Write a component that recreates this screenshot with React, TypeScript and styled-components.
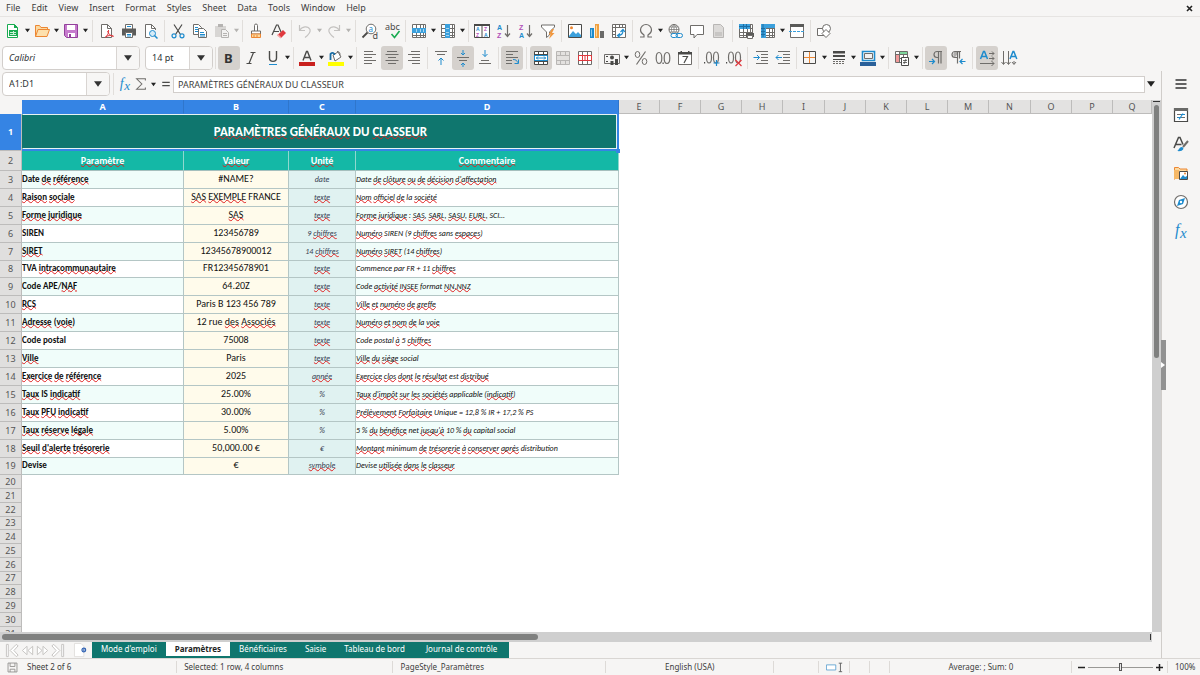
import React from "react";
import styled, { createGlobalStyle, css } from "styled-components";

const UI = `"Noto Sans", "Open Sans", sans-serif`;
const CELL = `Carlito, Lato, sans-serif`;
const SMALL = `"Liberation Sans", sans-serif`;

const c = {
  bg: "#f6f5f4",
  line: "#d9d6d3",
  ink: "#3d3d3d",
  dark: "#4a4a48",
  mid: "#6f6d6a",
  off: "#c4c2c0",
  blue: "#1e8bcd",
  sel: "#3584e4",
  orange: "#ed8733",
  red: "#e0393e",
  green: "#18ab50",
  purple: "#b04fb8",
  teal: "#0f766e",
  tealLight: "#14b8a6",
};

const Global = createGlobalStyle`
  *, *::before, *::after { box-sizing: border-box; }
  html, body { margin: 0; height: 100%; }
  body { background: ${c.bg}; color: ${c.ink}; font: 9px/12px ${UI}; overflow: hidden; }
  button, select, input { font: inherit; color: inherit; margin: 0; padding: 0; border: 0; background: none; }
`;

/* ---------- layout ---------- */

const Page = styled.div`
  display: flex;
  flex-direction: column;
  height: 100vh;
`;

const MenuBar = styled.nav`
  display: flex;
  align-items: center;
  gap: 11px;
  flex: none;
  height: 17px;
  padding: 0 6px;
  border-bottom: 1px solid #e6e4e2;
`;

const MenuItem = styled.button`
  white-space: nowrap;
`;

const CloseButton = styled.button`
  display: flex;
  margin-left: auto;
`;

const Toolbar = styled.div<{ $height: number }>`
  display: flex;
  align-items: center;
  flex: none;
  height: ${(p) => p.$height}px;
  padding: 0 2px 1px;
`;

const ToolButton = styled.button<{ $active?: boolean }>`
  display: flex;
  align-items: center;
  justify-content: center;
  flex: none;
  width: 22px;
  height: 24px;
  border-radius: 3px;
  ${(p) => p.$active && css`background: #d5d1cd;`}
`;

const DropButton = styled.button`
  display: flex;
  align-items: center;
  justify-content: center;
  flex: none;
  width: 7px;
  height: 24px;
`;

const Separator = styled.span<{ $width?: number }>`
  flex: none;
  width: ${(p) => p.$width ?? 5}px;
  height: 22px;
  background: linear-gradient(#e1dedb, #e1dedb) center / 1px 100% no-repeat;
`;

const Combo = styled.label<{ $width: number }>`
  position: relative;
  display: flex;
  flex: none;
  width: ${(p) => p.$width}px;
  height: 24px;
  border: 1px solid #d2cecb;
  border-radius: 4px;
  background: #fff;
  overflow: hidden;
`;

const ComboSelect = styled.select<{ $italic?: boolean }>`
  appearance: none;
  width: 100%;
  padding: 0 24px 0 6px;
  color: #2e3436;
  font-style: ${(p) => (p.$italic ? "italic" : "normal")};
`;

const ComboArrow = styled.span`
  position: absolute;
  inset: 0 0 0 auto;
  display: flex;
  align-items: center;
  justify-content: center;
  width: 23px;
  border-left: 1px solid #d9d5d2;
  background: #f7f6f5;
  pointer-events: none;
`;

const Gap = styled.span<{ $width: number }>`
  flex: none;
  width: ${(p) => p.$width}px;
`;

const Main = styled.div`
  display: flex;
  flex: 1;
  min-height: 0;
`;

const Workspace = styled.main`
  display: flex;
  flex-direction: column;
  flex: 1;
  min-width: 0;
`;

const FormulaBar = styled.div`
  display: flex;
  align-items: center;
  flex: none;
  height: 29px;
  padding: 0 4px 3px 2px;
`;

const FormulaInput = styled.input`
  flex: 1;
  min-width: 0;
  height: 17px;
  padding: 0 4px;
  border: 1px solid #d2cecb;
  background: #fff;
`;

const SmallButton = styled.button<{ $width: number }>`
  display: flex;
  align-items: center;
  justify-content: center;
  flex: none;
  width: ${(p) => p.$width}px;
  height: 22px;
`;

const SheetRow = styled.div`
  display: flex;
  flex: 1;
  min-height: 0;
`;

const SheetView = styled.div`
  flex: 1;
  min-width: 0;
  background: #fff;
  overflow: hidden;
`;

const Sidebar = styled.aside`
  position: relative;
  display: flex;
  flex-direction: column;
  align-items: center;
  gap: 5px;
  flex: none;
  width: 39px;
  padding-top: 1px;
  border-left: 1px solid #d0cdca;

  & > :first-child {
    margin-bottom: 2px;
  }
`;

const SidebarHandle = styled.button`
  position: absolute;
  left: -1px;
  top: calc(50% - 25px);
  display: flex;
  align-items: center;
  width: 5px;
  height: 50px;
  background: #929292;
`;

/* ---------- scroll bars ---------- */

const VScroll = styled.div`
  display: flex;
  flex-direction: column;
  align-items: center;
  flex: none;
  width: 9px;
  padding-top: 1px;
  background: #cfcfcf;
`;

const SplitMark = styled.span<{ $vertical?: boolean }>`
  flex: none;
  width: ${(p) => (p.$vertical ? 1 : 7)}px;
  height: ${(p) => (p.$vertical ? 6 : 1)}px;
  background: #333;
`;

const VThumb = styled.div`
  width: 5px;
  height: calc(100% * 10 / 21);
  margin-top: 3px;
  border-radius: 3px;
  background: #7f807f;
`;

const HScroll = styled.div`
  display: flex;
  align-items: center;
  justify-content: space-between;
  flex: none;
  height: 10px;
  margin-right: 9px;
  padding: 0 1px 0 2px;
  background: #cfcfcf;
`;

const HThumb = styled.div`
  width: calc(100% * 7 / 15);
  height: 6px;
  border-radius: 3px;
  background: #7f807f;
`;

/* ---------- sheet table ---------- */

const Grid = styled.table`
  table-layout: fixed;
  width: 100%;
  min-width: 1130px;
  border-collapse: separate;
  border-spacing: 0;
`;

const ColHead = styled.th<{ $selected?: boolean }>`
  height: 14px;
  padding: 0;
  border-right: 1px solid ${(p) => (p.$selected ? "#2f76cc" : "#bdbcbb")};
  border-bottom: 1px solid ${(p) => (p.$selected ? c.sel : "#bdbcbb")};
  background: ${(p) => (p.$selected ? c.sel : "#e3e2e1")};
  color: ${(p) => (p.$selected ? "#fff" : "#555")};
  font-weight: ${(p) => (p.$selected ? 700 : 400)};
`;

const Corner = styled.th`
  padding: 0;
  background: ${c.bg};
`;

const RowHead = styled.th<{ $h: number; $selected?: boolean }>`
  height: ${(p) => p.$h}px;
  padding: 0;
  border-right: 1px solid #bdbcbb;
  border-bottom: 1px solid #bdbcbb;
  background: ${(p) => (p.$selected ? c.sel : "#e0dfde")};
  color: ${(p) => (p.$selected ? "#fff" : "#555")};
  font-weight: ${(p) => (p.$selected ? 700 : 400)};
`;

const TitleCell = styled.td`
  position: relative;
  padding: 0 0 2px;
  background: ${c.teal};
  color: #fff;
  font: 700 13px/16px ${CELL};
  text-align: center;

  &::before {
    content: "";
    position: absolute;
    inset: 0 2px 2px 0;
    border: 1px solid #e8f3f2;
    border-left-color: ${c.teal};
    box-shadow: 1px 1px 0 1px ${c.sel};
    clip-path: inset(0 -2px -2px 0);
  }
  &::after {
    content: "";
    position: absolute;
    right: -1px;
    bottom: -2px;
    width: 4px;
    height: 4px;
    background: ${c.sel};
  }
`;

const HeadCell = styled.td`
  padding: 0;
  border-right: 1px solid #8fd8cf;
  border-bottom: 1px solid #a5bfbd;
  background: ${c.tealLight};
  color: #fff;
  font: 700 10px/12px ${CELL};
  text-align: center;
`;

const BodyCell = styled.td`
  padding: 0 0 2px;
  border-right: 1px solid #b4c6c5;
  border-bottom: 1px solid #b4c6c5;
  color: #111;
  font: 10px/12px ${CELL};
  white-space: nowrap;
  overflow: hidden;
`;

const LabelCell = styled(BodyCell)<{ $tint: boolean }>`
  background: ${(p) => (p.$tint ? "#f0fdfa" : "#fff")};
  font-size: 9px;
  font-weight: 700;
`;

const ValueCell = styled(BodyCell)`
  background: #fffbeb;
  text-align: center;
`;

const UnitCell = styled(BodyCell)`
  background: #e0f2f1;
  color: #374151;
  font-size: 8px;
  font-style: italic;
  text-align: center;
`;

const NoteCell = styled(BodyCell)<{ $tint: boolean }>`
  background: ${(p) => (p.$tint ? "#f0fdfa" : "#fff")};
  font-size: 8px;
  font-style: italic;
`;

const Misspelt = styled.span`
  text-decoration: underline wavy #e02020 1px;
  text-decoration-skip-ink: none;
  text-underline-offset: -1px;
`;

/* ---------- tabs and status ---------- */

const TabStrip = styled.div`
  display: flex;
  flex: none;
  height: 16px;
`;

const TabNav = styled.div`
  display: flex;
  align-items: center;
  flex: none;
  width: 92px;
  padding-left: 5px;
`;

const NavButton = styled.button`
  display: flex;
  width: 15px;
`;

const AddButton = styled.button`
  display: flex;
  margin-left: 9px;
`;

const Tab = styled.button<{ $active?: boolean }>`
  flex: none;
  padding: 0 9px;
  font-size: 8px;
  line-height: 14px;
  background: ${(p) => (p.$active ? "#fff" : c.teal)};
  color: ${(p) => (p.$active ? "#222" : "#fff")};
  font-weight: ${(p) => (p.$active ? 700 : 400)};
  border-bottom: 2px solid ${c.teal};

  &:last-child {
    padding: 0 12px;
  }
`;

const StatusBar = styled.footer`
  display: grid;
  grid-template-columns: 20px 157fr 216fr 212fr 168fr 45px 31px 20px 20px 182fr 96px 32px;
  align-items: center;
  flex: none;
  height: 17px;
  border-top: 1px solid ${c.line};
  font-size: 8px;
`;

const StatusCell = styled.div<{ $center?: boolean; $plain?: boolean }>`
  display: flex;
  align-items: center;
  justify-content: ${(p) => (p.$center ? "center" : "flex-start")};
  height: 12px;
  padding: 0 6px 0 7px;
  border-right: 1px solid ${(p) => (p.$plain ? "transparent" : "#dddad7")};
  white-space: nowrap;
`;

const ZoomCell = styled(StatusCell)`
  gap: 3px;
  padding: 0 4px 0 6px;
`;

const ZoomSlider = styled.input`
  appearance: none;
  flex: 1;
  min-width: 0;
  height: 8px;
  background: linear-gradient(#9a9996, #9a9996) center / 100% 1px no-repeat;

  &::-webkit-slider-thumb {
    appearance: none;
    width: 3px;
    height: 8px;
    border: 1px solid #555;
    background: #e8e8e8;
  }
`;

/* ---------- icons ---------- */

const L = (d: string, stroke = c.dark, w = 1, fill = "none") => (
  <path d={d} stroke={stroke} strokeWidth={w} fill={fill} />
);
const F = (d: string, fill = c.dark) => <path d={d} fill={fill} />;
const T = (x: number, y: number, s: string, fill: string, size = 8, style: React.CSSProperties = {}) => (
  <text x={x} y={y} fill={fill} fontSize={size} fontFamily={UI} style={style}>{s}</text>
);
const small = { fontFamily: SMALL, fontWeight: 700 };
const serif = { fontFamily: "Liberation Serif, serif", fontStyle: "italic" };

const tableLines = "M1.5 1.5h13v13h-13zM5.5 1.5v13M9.500 1.500v13M12.500 1.500v13M1.500 5.500h13M1.500 9.500h13M1.500 12.500h13";

const icons: Record<string, React.ReactNode> = {
  new: <>{L("M2.5 1.5h7l3 3v10h-10z", c.green, 1, "#fff")}{F("M9 1v4h4z", c.green)}{F("M4 7h8v6H4z", c.green)}{L("M5 9.5h6M5 11.5h6M8.5 8v4", "#c9f0d7")}</>,
  open: <>{L("M1.5 13.500V2.500h4l1.500 2h6.500v2", c.orange, 1, "#fbd9a0")}{L("M1.500 13.500l2.500-7h11.500l-2.500 7z", c.orange, 1, "#fde0ad")}</>,
  save: <>{L("M1.5 1.500h13v13H3.500l-2-2z", "#93409b", 1, "#c67bcd")}{F("M4 2h8v5H4zM5 10h7v4H5z", "#fff")}{F("M6 11h2v3H6z", "#93409b")}</>,
  pdf: <>{L("M2.5 1.5h6l4 4v9h-10z", c.mid, 1, "#fff")}{L("M8.500 1.500v4h4", c.mid)}{L("M6 14.500c3-2 4-5 3.500-7.500M8.500 8c1 3 3 5 6 5.500M6.500 14c2-1.500 5-2 8-1", c.red)}</>,
  print: <>{L("M4.500 6V1.500h7V6", c.mid, 1, "#fff")}{F("M1 5.500h14v7H1z", "#5b5b59")}{L("M4.500 9.500h7v5h-7z", c.mid, 1, "#fff")}{L("M6 3.500h4", c.blue)}{L("M6 11.500h4M6 13h4", c.blue)}</>,
  preview: <>{L("M7 14.500H2.500v-13h6l4 4V7", c.mid, 1, "#fff")}{L("M8.500 1.500v4h4", c.mid)}<circle cx="9.500" cy="10.500" r="3" fill="#d7ecf8" stroke={c.blue} />{L("M11.500 12.500l3 3", c.blue, 1.500)}</>,
  cut: <>{L("M4 1.500l6.500 10M12 1.500L5.500 11.500", c.dark, 1.200)}<circle cx="4" cy="12.800" r="2" fill="none" stroke={c.blue} strokeWidth="1.200" /><circle cx="12" cy="12.800" r="2" fill="none" stroke={c.blue} strokeWidth="1.200" /></>,
  copy: <>{L("M1.500 1.500h5l3 3v7h-8z", c.mid, 1, "#fff")}{L("M6.500 5.500h5l3 3v6h-8z", c.mid, 1, "#fff")}{L("M3 4.500h3M3 6.500h3M3 8.500h3M8 9.500h4M8 11.500h5M8 13h5", c.blue)}</>,
  paste: <>{F("M1 3h11v11H1z", "#d8d6d4")}{F("M4 1h5v3H4z", "#b5b3b1")}{L("M7.500 6.500h4l3 3v5h-7z", "#b5b3b1", 1, "#f3f2f1")}{L("M9 10.500h4M9 12.500h4", "#b5b3b1")}</>,
  brush: <>{L("M6.500 8V2.500a1.500 1.500 0 0 1 3 0V8", c.mid, 1, "#fff")}{L("M3.500 8h9v3h-9z", c.mid, 1, "#fff")}{L("M3.500 11v3.500h9V11z", c.orange, 1, "#fbd9a0")}{L("M6 12v2M9 12v2", c.orange)}</>,
  clear: <>{L("M2 12L6.500 2h1.500l3 7M4 8.500h5", c.dark, 1.200)}{F("M13 7l3 3-5 5-3.500-3z", c.red)}{F("M8 11l3.500 3.500-1 1-3.500-3z", "#f6a5a5")}</>,
  undo: <>{L("M2.500 2v5.500H8M2.500 7.500C5 3 11 2.500 13 6.500c1 3-1 5-5 8", c.off, 1.200)}</>,
  redo: <>{L("M13.500 2v5.500H8M13.500 7.500C11 3 5 2.500 3 6.500c-1 3 1 5 5 8", c.off, 1.200)}</>,
  find: <><circle cx="9" cy="6" r="4.800" fill="#fff" stroke={c.mid} />{L("M5.500 9.500l-5 5", c.dark, 1.800)}{T(6.500, 8.500, "a", c.blue, 8)}{T(10.500, 15.500, "d", c.dark, 9)}</>,
  spell: <>{T(1, 7, "abc", c.dark, 9)}{L("M7.500 11l3 3.500 5-6.500", c.green, 1.600)}</>,
  row: <>{L(tableLines, c.mid, 1, "#fff")}{F("M1 5h14v5H1z", "#3ba0dc")}{L("M5.500 6v3M9.500 6v3M12.500 6v3", "#a9d6f0")}</>,
  col: <>{L(tableLines, c.mid, 1, "#fff")}{F("M5 1h5v14H5z", "#3ba0dc")}{L("M6 5.500h3M6 9.500h3M6 12.500h3", "#a9d6f0")}</>,
  sort: <>{L("M.5 1.500h15v13H.5zM8 1.500v13", c.dark, 1, "#fff")}{F("M0 1h16v2H0z")}{T(2, 8, "A", c.blue, 5, small)}{T(2, 14, "Z", c.purple, 5, small)}{T(10, 8, "Z", c.purple, 5, small)}{T(10, 14, "A", c.blue, 5, small)}</>,
  az: <>{T(1, 7, "A", c.blue, 7, small)}{T(1, 15, "Z", c.purple, 7, small)}{L("M11.500 2v11M9 10.500l2.500 3 2.500-3", c.mid, 1.200)}</>,
  za: <>{T(1, 7, "Z", c.purple, 7, small)}{T(1, 15, "A", c.blue, 7, small)}{L("M11.500 2v11M9 10.500l2.500 3 2.500-3", c.mid, 1.200)}</>,
  filter: <>{L("M1.500 2h13v2L9.500 9v3L6.500 14.500V9L1.500 4z", c.mid, 1, "#fff")}{F("M12 6L8.500 11.500h2L9 16l5.500-6h-2.500l2-4z", "#f0973f")}</>,
  image: <>{L("M1.500 1.500h13v13h-13z", c.dark, 1, "#fff")}{F("M2 13l4-5 3 3 2-2 3 3v2H2z", "#3ba0dc")}<circle cx="4.500" cy="4.800" r="1.500" fill={c.orange} /></>,
  chart: <>{F("M1 5h4v10H1z", c.blue)}{F("M6 1h4v14H6z", "#f0a040")}{F("M11 8h4v7h-4z", "#6a6a68")}{L("M2.500 6.500v7", "#8dcaf0")}{L("M7.500 2.500v11", "#fbd9a0")}</>,
  pivot: <>{L("M1.500 1.500h13v13h-13zM4.500 1.500v13M1.500 4.500h13M4.500 8.500h-3M4.500 11.500h-3M8.500 1.500v3M11.500 1.500v3", c.mid, 1, "#fff")}{L("M7 12.500c3 0 5-2 5-5M9 10.500l-2.500 2 2.500 2M9.500 9l2.500-2.500L14 9", c.blue, 1.200)}</>,
  omega: <>{L("M2 14h4v-2C3.500 10.500 2.500 9 2.500 7a5.500 5.500 0 0 1 11 0c0 2-1 3.500-3.500 5v2h4", c.mid, 1.200)}</>,
  link: <><circle cx="7" cy="6.500" r="5" fill="#fff" stroke={c.mid} />{L("M2 6.500h10M7 1.500v10M3 4h8M3 9h8M7 1.500c-3.500 3-3.500 7 0 10M7 1.500c3.500 3 3.500 7 0 10", c.mid, 0.7)}<rect x="4" y="10.500" width="6.500" height="4" rx="2" fill="#fff" stroke={c.blue} /><rect x="9" y="10.500" width="6.500" height="4" rx="2" fill="none" stroke={c.blue} /></>,
  comment: <>{L("M1.500 2.500h13v9H8l-3 3.500v-3.500H1.500z", c.mid, 1, "#fff")}</>,
  header: <>{L("M2.500 1.500h7l3 3v10h-10z", "#b8b6b4", 1, "#dcdad8")}{F("M4 9h7v4H4z", "#c8c6c4")}</>,
  freezePrint: <>{L(tableLines, c.mid, 1, "#fff")}{F("M1 1h11v5H1z", "#3ba0dc")}{L("M1 3.500h11M5.500 1v5M8.500 1v5", "#1c6ea4")}{F("M8 10h8v4H8z", "#5b5b59")}{L("M9.500 12.500h5v3h-5z", c.mid, 1, "#fff")}</>,
  freeze: <>{L(tableLines, c.mid, 1, "#fff")}{F("M1 1h5v14H1zM5 1h10v4H5z", "#3ba0dc")}{L("M1 5.500h4M1 8.500h4M1 11.500h4M3 1v13", "#1c6ea4")}</>,
  split: <>{L("M1.500 1.500h13v13h-13z", c.mid, 1, "#fff")}{F("M1 1h14v3H1z", "#5b5b59")}<path d="M0 8.500h16" stroke="#3ba0dc" strokeDasharray="3 1" /></>,
  shapes: <>{L("M1.500 5.500h7v7h-7z", c.mid, 1, "#fff")}<circle cx="10.500" cy="5.500" r="4" fill="#fff" stroke={c.mid} />{L("M10 6.500l4 4-4 4-4-4z", c.mid, 1, "#fff")}</>,
  bold: T(3, 13, "B", "#333", 13, { fontWeight: 700 }),
  italic: L("M7.500 2.500h5M3.500 13.500h5M10.500 2.500l-4.500 11", c.dark, 1.200),
  underline: <>{L("M4.500 1v7c0 4.500 7 4.500 7 0V1", c.dark, 1.400)}{L("M4 14.500h8", c.blue, 1)}</>,
  fontColor: <>{L("M4 10.500L7.500 1.500h1l3.500 9M5 7.500h6", c.dark, 1.400)}{F("M0 12h16v4H0z", "#c9211e")}</>,
  highlight: <>{F("M0 12h16v4H0z", "#ffff00")}{L("M5 5l5-3 3 5-6 4z", c.mid, 1, "#fff")}{L("M9 1.500c3 0 3 2 3 4", c.mid)}{L("M2.500 10V4c2-2 4-1 4 1", "#1c6ea4", 1.800)}</>,
  left: L("M2 1.500h9M2 4.500h12M2 7.500h8M2 10.500h12M2 13.500h8", c.mid),
  center: L("M3 1.500h10M1.500 4.500h13M4 7.500h8M1.500 10.500h13M4 13.500h8", c.mid),
  right: L("M5 1.500h9M2 4.500h12M6 7.500h8M2 10.500h12M6 13.500h8", c.mid),
  top: <>{L("M2 1.500h12M4 4.500h8", c.mid)}{L("M8 15V8.500M5.500 10.500L8 8l2.500 2.500", c.blue)}</>,
  middle: <>{L("M2 7.500h12M4 10.500h8", c.mid)}{L("M8 0v5M6 3l2 2 2-2M8 17v-4M6 15l2-2 2 2", c.blue)}</>,
  bottom: <>{L("M4 10.500h8M2 13.500h12", c.mid)}{L("M8 0v6.500M5.500 4L8 6.500 10.500 4", c.blue)}</>,
  wrap: <>{L("M2 1.500h12M2 4.500h7M2 7.500h12M2 10.500h6M2 13.500h6", c.mid)}{L("M9 9.500c3 0 4 1 4.500 3M10.500 13.500h4v-4", c.blue)}</>,
  merge: <>{L("M1.500 1.500h13v13h-13zM1.500 4.500h13M1.500 11.500h13M5.500 1.500v3M10.500 1.500v3M5.500 11.500v3M10.500 11.500v3", c.dark, 1, "#fff")}{L("M1.500 5.500h13v5h-13zM3 8h10M5 6.500L3.500 8 5 9.500M11 6.500l1.500 1.500-1.500 1.500", c.blue)}</>,
  mergeOff: <>{L("M1.500 1.500h13v13h-13zM1.500 5.500h13M1.500 10.500h13M5.500 1.500v4M10.500 1.500v4M5.500 10.500v4M10.500 10.500v4", "#b8b6b4", 1, "#e3e1df")}</>,
  unmerge: <>{L("M1.500 1.500h13v13h-13zM5.500 1.500v13M10.500 1.500v13", c.mid, 1, "#fff")}{L("M1.500 5.500h13v5h-13zM5.500 5v6M10.500 5v6M8 5v6", c.red)}</>,
  currency: <>{L("M.5 4.500h15v9H.5z", c.mid)}<circle cx="8" cy="7.500" r="2" fill={c.dark} />{F("M6.500 11h3v4h-3zM11 9h3v6h-3z", c.dark)}{L("M2 6.500h2M2 11.500h2", c.dark)}</>,
  percent: <>{L("M3.500 14.500l9-13", c.mid, 1.200)}<ellipse cx="4.500" cy="4.500" rx="2.300" ry="3" fill="none" stroke={c.mid} /><ellipse cx="11.500" cy="11.500" rx="2.300" ry="3" fill="none" stroke={c.mid} /></>,
  number: <><ellipse cx="4" cy="8" rx="2.800" ry="5.500" fill="none" stroke={c.mid} strokeWidth="1.200" /><ellipse cx="12" cy="8" rx="2.800" ry="5.500" fill="none" stroke={c.mid} strokeWidth="1.200" />{F("M7.500 12.500h1.200v1.500H7.500z")}</>,
  date: <>{L("M1.500 2.500h13v12h-13z", c.mid, 1, "#fff")}{F("M1 2h14v2.500H1zM3.500 1h1.500v2H3.500zM11 1h1.500v2H11z")}{L("M5.500 6.500h5l-3.500 6.500", c.dark, 1.200)}</>,
  addDec: <>{F("M0 12h1.200v1.500H0z")}<ellipse cx="5" cy="7.500" rx="2.500" ry="5.500" fill="none" stroke={c.mid} strokeWidth="1.200" /><ellipse cx="12" cy="7.500" rx="2.500" ry="5.500" fill="none" stroke={c.mid} strokeWidth="1.200" />{L("M12.500 10v6M9.500 13h6", c.blue, 1.200)}</>,
  delDec: <>{F("M0 12h1.200v1.500H0z")}<ellipse cx="5" cy="7.500" rx="2.500" ry="5.500" fill="none" stroke={c.mid} strokeWidth="1.200" /><ellipse cx="12" cy="7.500" rx="2.500" ry="5.500" fill="none" stroke={c.mid} strokeWidth="1.200" />{L("M9.500 10l6 6M15.500 10l-6 6", c.red, 1.200)}</>,
  indent: <>{L("M3 1.500h12M8 4.500h7M8 7.500h7M8 10.500h7M3 13.500h12", c.mid)}{L("M.5 7.500h6M4 5l2.500 2.500L4 10", c.blue)}</>,
  outdent: <>{L("M3 1.500h12M8 4.500h7M8 7.500h7M8 10.500h7M3 13.500h12", c.mid)}{L("M1 7.500h6M3.500 5L1 7.500 3.500 10", c.blue)}</>,
  borders: <>{L("M7.500 2v12M2 7.500h12", c.orange, 1)}{L("M1.500 1.500h12v12h-12z", c.dark, 1)}</>,
  lineStyle: <>{F("M2 1h12v2.500H2zM2 5h12v2H2z", c.dark)}{L("M2 9.500h12", c.dark)}<path d="M2 11.500h12M2 13.500h12" stroke={c.mid} strokeDasharray="2 1" /></>,
  lineColor: <>{L("M2.500 1.500h12v9h-12z", c.blue, 1.600, "#fff")}{L("M4.500 3.500h8v5h-8z", c.mid, 1, "#f2f2f2")}{F("M0 12h16v4H0z", "#2a6099")}</>,
  conditional: <>{L("M1.500 1.500h12v11h-12zM5.500 1.500v11M9.500 1.500v11M1.500 4.500h12M1.500 8.500h12", c.mid, 1, "#fff")}{F("M6 2h7v2H6z", "#7fd69c")}{F("M2 5h3v7H2z", "#f19a9a")}{L("M7.500 7.500h7v8h-7z", c.dark, 1, "#fff")}{L("M9 10.500h4M9 12.500h4M12 9l-2 5", c.dark, 0.8)}</>,
  ltr: <>{L("M14 1.500H9a3 3 0 0 0 0 6h1M10.500 1.500v12M13 1.500v12", c.mid, 1.200)}{L("M1 11.500h5M4 9l2.500 2.500L4 14", c.blue, 1.200)}</>,
  rtl: <>{F("M9 1.500H5a3.500 3.500 0 0 0 0 6z", "#b0aeac")}{L("M11 1.500H5a3 3 0 0 0 0 6h2M7.500 1.500v12M9.500 1.500v7", c.mid, 1.200)}{L("M10 11.500h5.500M12.500 9L10 11.500l2.500 2.500", c.blue, 1.200)}</>,
  textLtr: <>{L("M1.500 9L4.500 1.500h1l3 7.500M2.500 6.500h5", c.blue, 1.500)}{L("M10 3.500h5M13 1.500l2 2-2 2M10 8.500h5M13 6.500l2 2-2 2M1 13.500h14M12.500 11l2.500 2.500-2.500 2.500", c.mid)}</>,
  textTtb: <>{L("M9 9l3-7.500h.8l3 7.500M10 6.500h5", c.blue, 1.500)}{L("M2.500 1v13M.5 12l2 2.500L4.500 12M7.500 1v13M5.500 12l2 2.500L9.500 12M13 11v3M11 12l2 2.500L15 12", c.mid)}</>,
  fx: <>{T(2, 12, "f", c.blue, 16, serif)}{T(7, 14.500, "x", c.blue, 15, serif)}</>,
  sum: L("M13 4V2H3l6 6-6 6h10v-2", c.mid, 1.200),
  equals: L("M2 5.500h12M2 10.500h12", c.dark, 2),
  menu: L("M2.500 4h11M2.500 8h11M2.500 12h11", "#333", 1.500),
  properties: <>{L("M1.500 1.500h13v13h-13z", c.dark, 1.200, "#fff")}{F("M1 1h14v3H1z", "#6a6a68")}{L("M4 7.500h8M4 10.500h8", c.mid)}{L("M6 12.500l4-6", c.blue, 1.100)}{L("M4.500 10.500h4M8 7.500h4", c.blue)}</>,
  styles: <>{L("M1 12L5.500 1.500h1.500l3 7M2.500 8.500h6", c.dark, 1.500)}{L("M15 5l-5 6", c.mid, 2)}{F("M4 15c2-.500 2-4 5-4 3 1 1 5-5 4z", c.blue)}</>,
  gallery: <>{L("M1.500 14.500v-12h4l1.500 1.500h7v3", c.orange, 1, "#fbd9a0")}{F("M1 5h5v9H1z", "#f6b866")}{L("M6.500 6.500h8v8h-8z", c.dark, 1, "#fff")}{F("M7 14l3-4 2 2 2-1v3z", c.blue)}<circle cx="12" cy="8.500" r="1" fill={c.orange} /></>,
  navigator: <><circle cx="8" cy="8" r="6.500" fill="#fff" stroke={c.mid} strokeWidth="1.200" />{F("M12 4l-2 6-6 2 2-6z", c.blue)}<circle cx="8" cy="8" r="1.200" fill="#fff" /></>,
  first: L("M1.500 1.500h2v13h-2zM12 1.500l2 1.500-4.500 5 4.500 5-2 1.500L5.500 8z", c.off, 1, "#fff"),
  prev: L("M7.500 3.500v9L2.500 8zM13.500 3.500v9L8.500 8z", c.off, 1, "#fff"),
  next: L("M2.500 3.500v9l5-4.500zM8.500 3.500v9l5-4.500z", c.off, 1, "#fff"),
  last: L("M12.500 1.500h2v13h-2zM4 1.500L2 3l4.500 5L2 13l2 1.500L10.500 8z", c.off, 1, "#fff"),
  addSheet: <>{L("M.5 .5h7l3 3v11H.5z", "#e1dfdd", 1, "#fff")}<circle cx="10.500" cy="7.500" r="2" fill="#fff" stroke="#2a5db0" strokeWidth="1.200" />{L("M10.500 6.500v2M9.500 7.500h2", "#2a5db0", 0.8)}</>,
  disk: L("M1.500 1.500h13v13h-13zM4.500 1.500v5h7v-5M4.500 14.500v-4h7v4", "#8b8987", 1.200),
};

const Icon = ({ name, size = 16 }: { name: string; size?: number }) => (
  <svg width={size} height={size} viewBox="0 0 16 16" aria-hidden="true" overflow="visible">
    {icons[name]}
  </svg>
);

const Arrow = ({ size = 5, color = "#222" }: { size?: number; color?: string }) => (
  <svg width={size} height={size} viewBox="0 0 6 6" aria-hidden="true">
    <path d="M0 1h6L3 5z" fill={color} />
  </svg>
);

/* ---------- data ---------- */

const menus = ["File", "Edit", "View", "Insert", "Format", "Styles", "Sheet", "Data", "Tools", "Window", "Help"];

/* "|" is a separator, "||" a wider one, "▾" a drop arrow, "▿" a disabled one, "*" marks a pressed button */
const standardTools = "new ▾ open ▾ save ▾ || pdf print preview | cut copy paste ▿ | brush clear | undo ▿ redo ▿ || find spell | row ▾ col ▾ | sort az za filter | image chart pivot | omega ▾ link comment header | freezePrint freeze ▾ split | shapes";
const formatTools = "*bold italic underline ▾ | fontColor ▾ highlight ▾ | left *center right | top *middle bottom | *wrap || *merge mergeOff unmerge | currency ▾ percent number date | addDec delDec | indent outdent | borders ▾ lineStyle ▾ lineColor ▾ | conditional ▾ | *ltr rtl || *textLtr textTtb";

const colWidths = [22, 162, 105, 67, 263, 41, 41, 41, 41, 42, 41, 41, 41, 41, 42, 41, 41];
const letters = "ABCDEFGHIJKLMNOPQ".split("");

/* words between braces carry the spelling mark */
const rows: [string, string, string, string][] = [
  ["Date {de référence}", "#NAME?", "date", "Date {de clôture ou de décision d'affectation}"],
  ["{Raison sociale}", "{SAS EXEMPLE} FRANCE", "{texte}", "{Nom officiel de} la {société}"],
  ["{Forme juridique}", "{SAS}", "{texte}", "{Forme juridique} : {SAS}, {SARL}, {SASU}, {EURL}, SCI…"],
  ["SIREN", "123456789", "9 {chiffres}", "{Numéro} SIREN (9 {chiffres} sans {espaces})"],
  ["{SIRET}", "12345678900012", "14 {chiffres}", "{Numéro SIRET} (14 {chiffres})"],
  ["TVA {intracommunautaire}", "FR12345678901", "{texte}", "Commence par FR + 11 {chiffres}"],
  ["Code APE/{NAF}", "64.20Z", "{texte}", "Code {activité INSEE} format {NN.NNZ}"],
  ["{RCS}", "Paris B 123 456 789", "{texte}", "{Ville et numéro de greffe}"],
  ["{Adresse} ({voie})", "12 rue {des Associés}", "{texte}", "{Numéro et nom de} la {voie}"],
  ["Code postal", "75008", "{texte}", "Code postal {à} 5 {chiffres}"],
  ["{Ville}", "Paris", "{texte}", "{Ville du siège} social"],
  ["{Exercice de référence}", "2025", "{année}", "{Exercice clos dont le résultat} est {distribué}"],
  ["{Taux} IS {indicatif}", "25.00%", "%", "{Taux d'impôt sur les sociétés} applicable ({indicatif})"],
  ["{Taux PFU indicatif}", "30.00%", "%", "{Prélèvement Forfaitaire} Unique = 12,8 % IR + 17,2 % PS"],
  ["{Taux réserve légale}", "5.00%", "%", "5 % {du bénéfice} net {jusqu'à} 10 % {du} capital social"],
  ["{Seuil d'alerte trésorerie}", "50,000.00 €", "€", "{Montant} minimum {de trésorerie à conserver après} distribution"],
  ["Devise", "€", "{symbole}", "Devise {utilisée dans le classeur}"],
];
const rowHeights = [18, 18, 18, 18, 18, 17, 18, 18, 18, 18, 18, 18, 18, 18, 18, 18, 17];
const emptyHeights = [14, 14, 14, 13, 14, 14, 14, 13, 14, 14, 14, 14];

const tabs = ["Mode d'emploi", "Paramètres", "Bénéficiaires", "Saisie", "Tableau de bord", "Journal de contrôle"];

/* ---------- parts ---------- */

const Spelled = ({ text }: { text: string }) => (
  <>
    {text.split(/(\{[^}]*\})/).map((part, i) =>
      part.startsWith("{")
        ? part.slice(1, -1).split(" ").map((word, j) => (
            <React.Fragment key={`${i}-${j}`}>
              {j > 0 && " "}
              <Misspelt>{word}</Misspelt>
            </React.Fragment>
          ))
        : part
    )}
  </>
);

const Tools = ({ list }: { list: string }) => (
  <>
    {list.split(" ").map((t, i) => {
      if (t === "|") return <Separator key={i} />;
      if (t === "||") return <Separator key={i} $width={7} />;
      if (t === "▾" || t === "▿")
        return (
          <DropButton key={i} aria-label="More options">
            <Arrow color={t === "▿" ? "#b5b3b1" : "#222"} />
          </DropButton>
        );
      const active = t.startsWith("*");
      const name = active ? t.slice(1) : t;
      return (
        <ToolButton key={i} $active={active} aria-label={name} aria-pressed={active}>
          <Icon name={name} />
        </ToolButton>
      );
    })}
  </>
);

const ComboBox = ({ label, value, width, italic }: { label: string; value: string; width: number; italic?: boolean }) => (
  <Combo $width={width}>
    <ComboSelect aria-label={label} $italic={italic} defaultValue={value}>
      <option>{value}</option>
    </ComboSelect>
    <ComboArrow><Arrow size={8} color="#333" /></ComboArrow>
  </Combo>
);

export default function App() {
  return (
    <Page>
      <Global />
      <MenuBar>
        {menus.map((m) => <MenuItem key={m}>{m}</MenuItem>)}
        <CloseButton aria-label="Close document">
          <svg width="9" height="9" viewBox="0 0 9 9"><path d="M2 2l5 5M7 2L2 7" stroke="#222" strokeWidth="1.600" /></svg>
        </CloseButton>
      </MenuBar>
      <Toolbar $height={28}><Tools list={standardTools} /></Toolbar>
      <Toolbar $height={26}>
        <ComboBox label="Font name" value="Calibri" width={138} italic />
        <Gap $width={5} />
        <ComboBox label="Font size" value="14 pt" width={68} />
        <Separator />
        <Tools list={formatTools} />
      </Toolbar>
      <Main>
        <Workspace>
          <FormulaBar>
            <ComboBox label="Name box" value="A1:D1" width={108} />
            <Separator $width={7} />
            <SmallButton $width={16} aria-label="Function wizard"><Icon name="fx" size={14} /></SmallButton>
            <SmallButton $width={15} aria-label="Select function"><Icon name="sum" size={14} /></SmallButton>
            <SmallButton $width={10} aria-label="Function options"><Arrow /></SmallButton>
            <SmallButton $width={15} aria-label="Formula"><Icon name="equals" size={10} /></SmallButton>
            <FormulaInput aria-label="Formula" defaultValue="PARAMÈTRES GÉNÉRAUX DU CLASSEUR" />
            <SmallButton $width={12} aria-label="Expand formula bar"><Arrow size={8} /></SmallButton>
          </FormulaBar>
          <SheetRow>
            <SheetView>
              <Grid>
                <colgroup>
                  {colWidths.map((w, i) => <col key={i} width={w} />)}
                  <col />
                </colgroup>
                <thead>
                  <tr>
                    <Corner />
                    {letters.map((l, i) => <ColHead key={l} $selected={i < 4}>{l}</ColHead>)}
                  </tr>
                </thead>
                <tbody>
                  <tr>
                    <RowHead $h={37} $selected>1</RowHead>
                    <TitleCell colSpan={4}><Spelled text="{PARAMÈTRES GÉNÉRAUX} DU {CLASSEUR}" /></TitleCell>
                  </tr>
                  <tr>
                    <RowHead $h={20}>2</RowHead>
                    {["Paramètre", "Valeur", "Unité", "Commentaire"].map((h) => (
                      <HeadCell key={h}><Misspelt>{h}</Misspelt></HeadCell>
                    ))}
                  </tr>
                  {rows.map(([label, value, unit, note], i) => (
                    <tr key={i}>
                      <RowHead $h={rowHeights[i]}>{i + 3}</RowHead>
                      <LabelCell $tint={i % 2 === 0}><Spelled text={label} /></LabelCell>
                      <ValueCell><Spelled text={value} /></ValueCell>
                      <UnitCell><Spelled text={unit} /></UnitCell>
                      <NoteCell $tint={i % 2 === 0}><Spelled text={note} /></NoteCell>
                    </tr>
                  ))}
                  {emptyHeights.map((h, i) => (
                    <tr key={i}><RowHead $h={h}>{i + 20}</RowHead></tr>
                  ))}
                </tbody>
              </Grid>
            </SheetView>
            <VScroll><SplitMark /><VThumb /></VScroll>
          </SheetRow>
          <HScroll><HThumb /><SplitMark $vertical /></HScroll>
          <TabStrip>
            <TabNav>
              {["first", "prev", "next", "last"].map((n) => (
                <NavButton key={n} aria-label={`${n} sheet`}><Icon name={n} size={15} /></NavButton>
              ))}
              <AddButton aria-label="Add sheet"><Icon name="addSheet" size={15} /></AddButton>
            </TabNav>
            {tabs.map((t, i) => <Tab key={t} $active={i === 1}>{t}</Tab>)}
          </TabStrip>
        </Workspace>
        <Sidebar>
          {["menu", "properties", "styles", "gallery", "navigator", "fx"].map((n) => (
            <ToolButton key={n} aria-label={n}><Icon name={n} /></ToolButton>
          ))}
          <SidebarHandle aria-label="Hide sidebar">
            <svg width="4" height="6" viewBox="0 0 4 6"><path d="M0 0l4 3-4 3z" fill="#fff" /></svg>
          </SidebarHandle>
        </Sidebar>
      </Main>
      <StatusBar>
        <StatusCell $plain><Icon name="disk" size={11} /></StatusCell>
        <StatusCell>Sheet 2 of 6</StatusCell>
        <StatusCell>Selected: 1 row, 4 columns</StatusCell>
        <StatusCell>PageStyle_Paramètres</StatusCell>
        <StatusCell $center>English (USA)</StatusCell>
        <StatusCell />
        <StatusCell>
          <svg width="20" height="12" viewBox="0 0 20 12" aria-hidden="true">
            <path d="M.5 3.500h11v6H.5z" fill="#fff" stroke="#5a9fd0" />
            <path d="M15 1.500h4M15 11.500h4M17 1.500v10" stroke="#555" fill="none" />
          </svg>
        </StatusCell>
        <StatusCell />
        <StatusCell />
        <StatusCell $center>Average: ; Sum: 0</StatusCell>
        <ZoomCell>
          <svg width="7" height="7" viewBox="0 0 7 7"><path d="M0 3.500h7" stroke="#222" strokeWidth="1.500" /></svg>
          <ZoomSlider type="range" min={0} max={100} defaultValue={50} aria-label="Zoom" />
          <svg width="7" height="7" viewBox="0 0 7 7"><path d="M0 3.500h7M3.500 0v7" stroke="#222" strokeWidth="1.500" /></svg>
        </ZoomCell>
        <StatusCell $plain>100%</StatusCell>
      </StatusBar>
    </Page>
  );
}
